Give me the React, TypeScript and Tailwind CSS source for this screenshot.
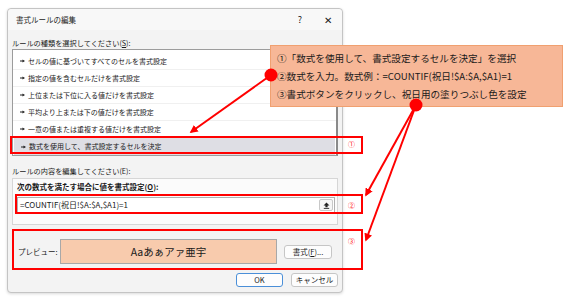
import React from "react";

const rules = [
  "セルの値に基づいてすべてのセルを書式設定",
  "指定の値を含むセルだけを書式設定",
  "上位または下位に入る値だけを書式設定",
  "平均より上または下の値だけを書式設定",
  "一意の値または重複する値だけを書式設定",
  "数式を使用して、書式設定するセルを決定",
];

const jp = { fontFamily: '"Noto Sans CJK JP", "Noto Sans", sans-serif' };

function Bullet() {
  return (
    <svg width="5" height="4" viewBox="0 0 6 4" className="shrink-0">
      <path d="M0 1.3h3V0.2l3 1.8-3 1.8V2.7H0z" fill="#222" />
    </svg>
  );
}

function Annotations() {
  return (
    <svg
      width="567"
      height="299"
      viewBox="0 0 567 299"
      className="pointer-events-none absolute left-0 top-0"
    >
      <defs>
        <marker id="head" viewBox="0 0 10 10" refX="8" refY="5" markerWidth="4" markerHeight="4" orient="auto">
          <path d="M0 0L10 5L0 10z" fill="#ff0000" />
        </marker>
      </defs>
      <line x1="271" y1="75" x2="191" y2="132" stroke="#ff0000" strokeWidth="2" markerEnd="url(#head)" />
      <line x1="416" y1="105" x2="366" y2="195" stroke="#ff0000" strokeWidth="2" markerEnd="url(#head)" />
      <line x1="416" y1="105" x2="366" y2="240" stroke="#ff0000" strokeWidth="2" markerEnd="url(#head)" />
      <circle cx="271" cy="75" r="6.5" fill="#ff0000" />
      <circle cx="416" cy="105" r="6.5" fill="#ff0000" />
    </svg>
  );
}

export default function App() {
  return (
    <div className="relative h-[299px] w-[567px] overflow-hidden bg-white" style={jp}>
      <div className="ml-[7px] mt-[8px] flex h-[285px] w-[336px] flex-col rounded-[4px] border border-[#c4c4c4] bg-[#f3f3f3] text-[#1a1a1a] shadow-[0_1px_3px_rgba(0,0,0,0.15)]">
        {/* title bar */}
        <div className="flex h-[21px] items-center justify-between rounded-t-[4px] bg-[#f8f8f8] pl-[8px] pr-[10px] text-[7.5px]">
          <span>書式ルールの編集</span>
          <div className="flex items-center gap-[22px] text-[9px]">
            <span>?</span>
            <span className="text-[10px] font-light">✕</span>
          </div>
        </div>

        <div className="flex flex-1 flex-col px-[4px]">
          <div className="flex h-[19px] items-end pb-[1px] text-[7.2px] leading-[10px]">
            ルールの種類を選択してください(<span className="underline">S</span>):
          </div>

          {/* rule list */}
          <div className="flex h-[107px] flex-col border border-[#9c9c9c] border-r-2 border-r-[#8a8a8a] bg-white pt-[3px]">
            {rules.map((r, i) => (
              <div
                key={r}
                className={`flex h-[17px] items-center gap-[3px] pl-[7px] text-[7px] ${
                  i === 5 ? "mx-[1px] bg-[#dedee4]" : "border-b border-[#f0f0f0]"
                }`}
              >
                <Bullet />
                <span>{r}</span>
              </div>
            ))}
          </div>

          <div className="flex h-[22px] items-end pb-[2px] text-[7.2px] leading-[10px]">
            ルールの内容を編集してください(E):
          </div>

          {/* edit panel */}
          <div className="flex h-[47px] flex-col border border-[#d6d6d6] bg-[#fbfbfb] px-[4px]">
            <div className="flex h-[15px] items-center text-[7.5px] font-bold">
              次の数式を満たす場合に値を書式設定(<span className="underline">O</span>):
            </div>
            <div className="mt-[3px] flex h-[16px] w-[318px] items-center justify-between border border-[#b0b0b0] bg-white pl-[2px] pr-[1px]">
              <span className="text-[8px]">=COUNTIF(祝日!$A:$A,$A1)=1</span>
              <span className="flex h-[12px] w-[14px] items-center justify-center rounded-[2px] border border-[#c8c8c8] bg-[#f6f6f6]">
                <svg width="7" height="7" viewBox="0 0 7 7">
                  <path d="M3.5 0.5L6.5 3.5H4.6V5.2H2.4V3.5H0.5z" fill="#222" />
                  <rect x="0.8" y="5.9" width="5.4" height="0.9" fill="#222" />
                </svg>
              </span>
            </div>
          </div>

          {/* preview */}
          <div className="mt-[14px] flex h-[25px] items-center">
            <span className="w-[48px] pl-[6px] text-[7.5px]">プレビュー:</span>
            <div className="flex h-[25px] w-[217px] items-center justify-center border border-[#a8a8a8] bg-[#f8cbad] text-[10.5px]">
              Aaあぁアァ亜宇
            </div>
            <button className="ml-[7px] flex h-[14px] w-[48px] items-center justify-center rounded-[3px] border border-[#c6c6c6] bg-[#fdfdfd] text-[7.5px]">
              書式(<span className="underline">F</span>)...
            </button>
          </div>

          {/* footer buttons */}
          <div className="mt-[9px] flex justify-end gap-[8px] pr-[0px]">
            <button className="flex h-[14px] w-[47px] items-center justify-center rounded-[3px] border border-[#4a8fd8] bg-[#fdfdfd] text-[7.5px]">
              OK
            </button>
            <button className="flex h-[14px] w-[47px] items-center justify-center rounded-[3px] border border-[#c6c6c6] bg-[#fdfdfd] text-[7.5px]">
              キャンセル
            </button>
          </div>
        </div>
      </div>

      {/* callout */}
      <div className="absolute left-[270px] top-[45px] flex h-[62px] w-[293px] flex-col justify-center border border-[#f0a070] bg-[#f7b797] pl-[6px] text-[9.6px] leading-[18px] text-[#1a1a1a]">
        <div>①「数式を使用して、書式設定するセルを決定」を選択</div>
        <div>②数式を入力。数式例：=COUNTIF(祝日!$A:$A,$A1)=1</div>
        <div>③書式ボタンをクリックし、祝日用の塗りつぶし色を設定</div>
      </div>

      {/* red highlight boxes */}
      <div className="absolute left-[10px] top-[136px] h-[18px] w-[353px] border-2 border-[#ff0000]" />
      <div className="absolute left-[15px] top-[194px] h-[20px] w-[348px] border-2 border-[#ff0000]" />
      <div className="absolute left-[12px] top-[229px] h-[41px] w-[351px] border-2 border-[#ff0000]" />
      <span className="absolute left-[348px] top-[139px] text-[7px] text-[#ff0000]">①</span>
      <span className="absolute left-[348px] top-[200px] text-[7px] text-[#ff0000]">②</span>
      <span className="absolute left-[348px] top-[236px] text-[7px] text-[#ff0000]">③</span>

      <Annotations />
    </div>
  );
}
